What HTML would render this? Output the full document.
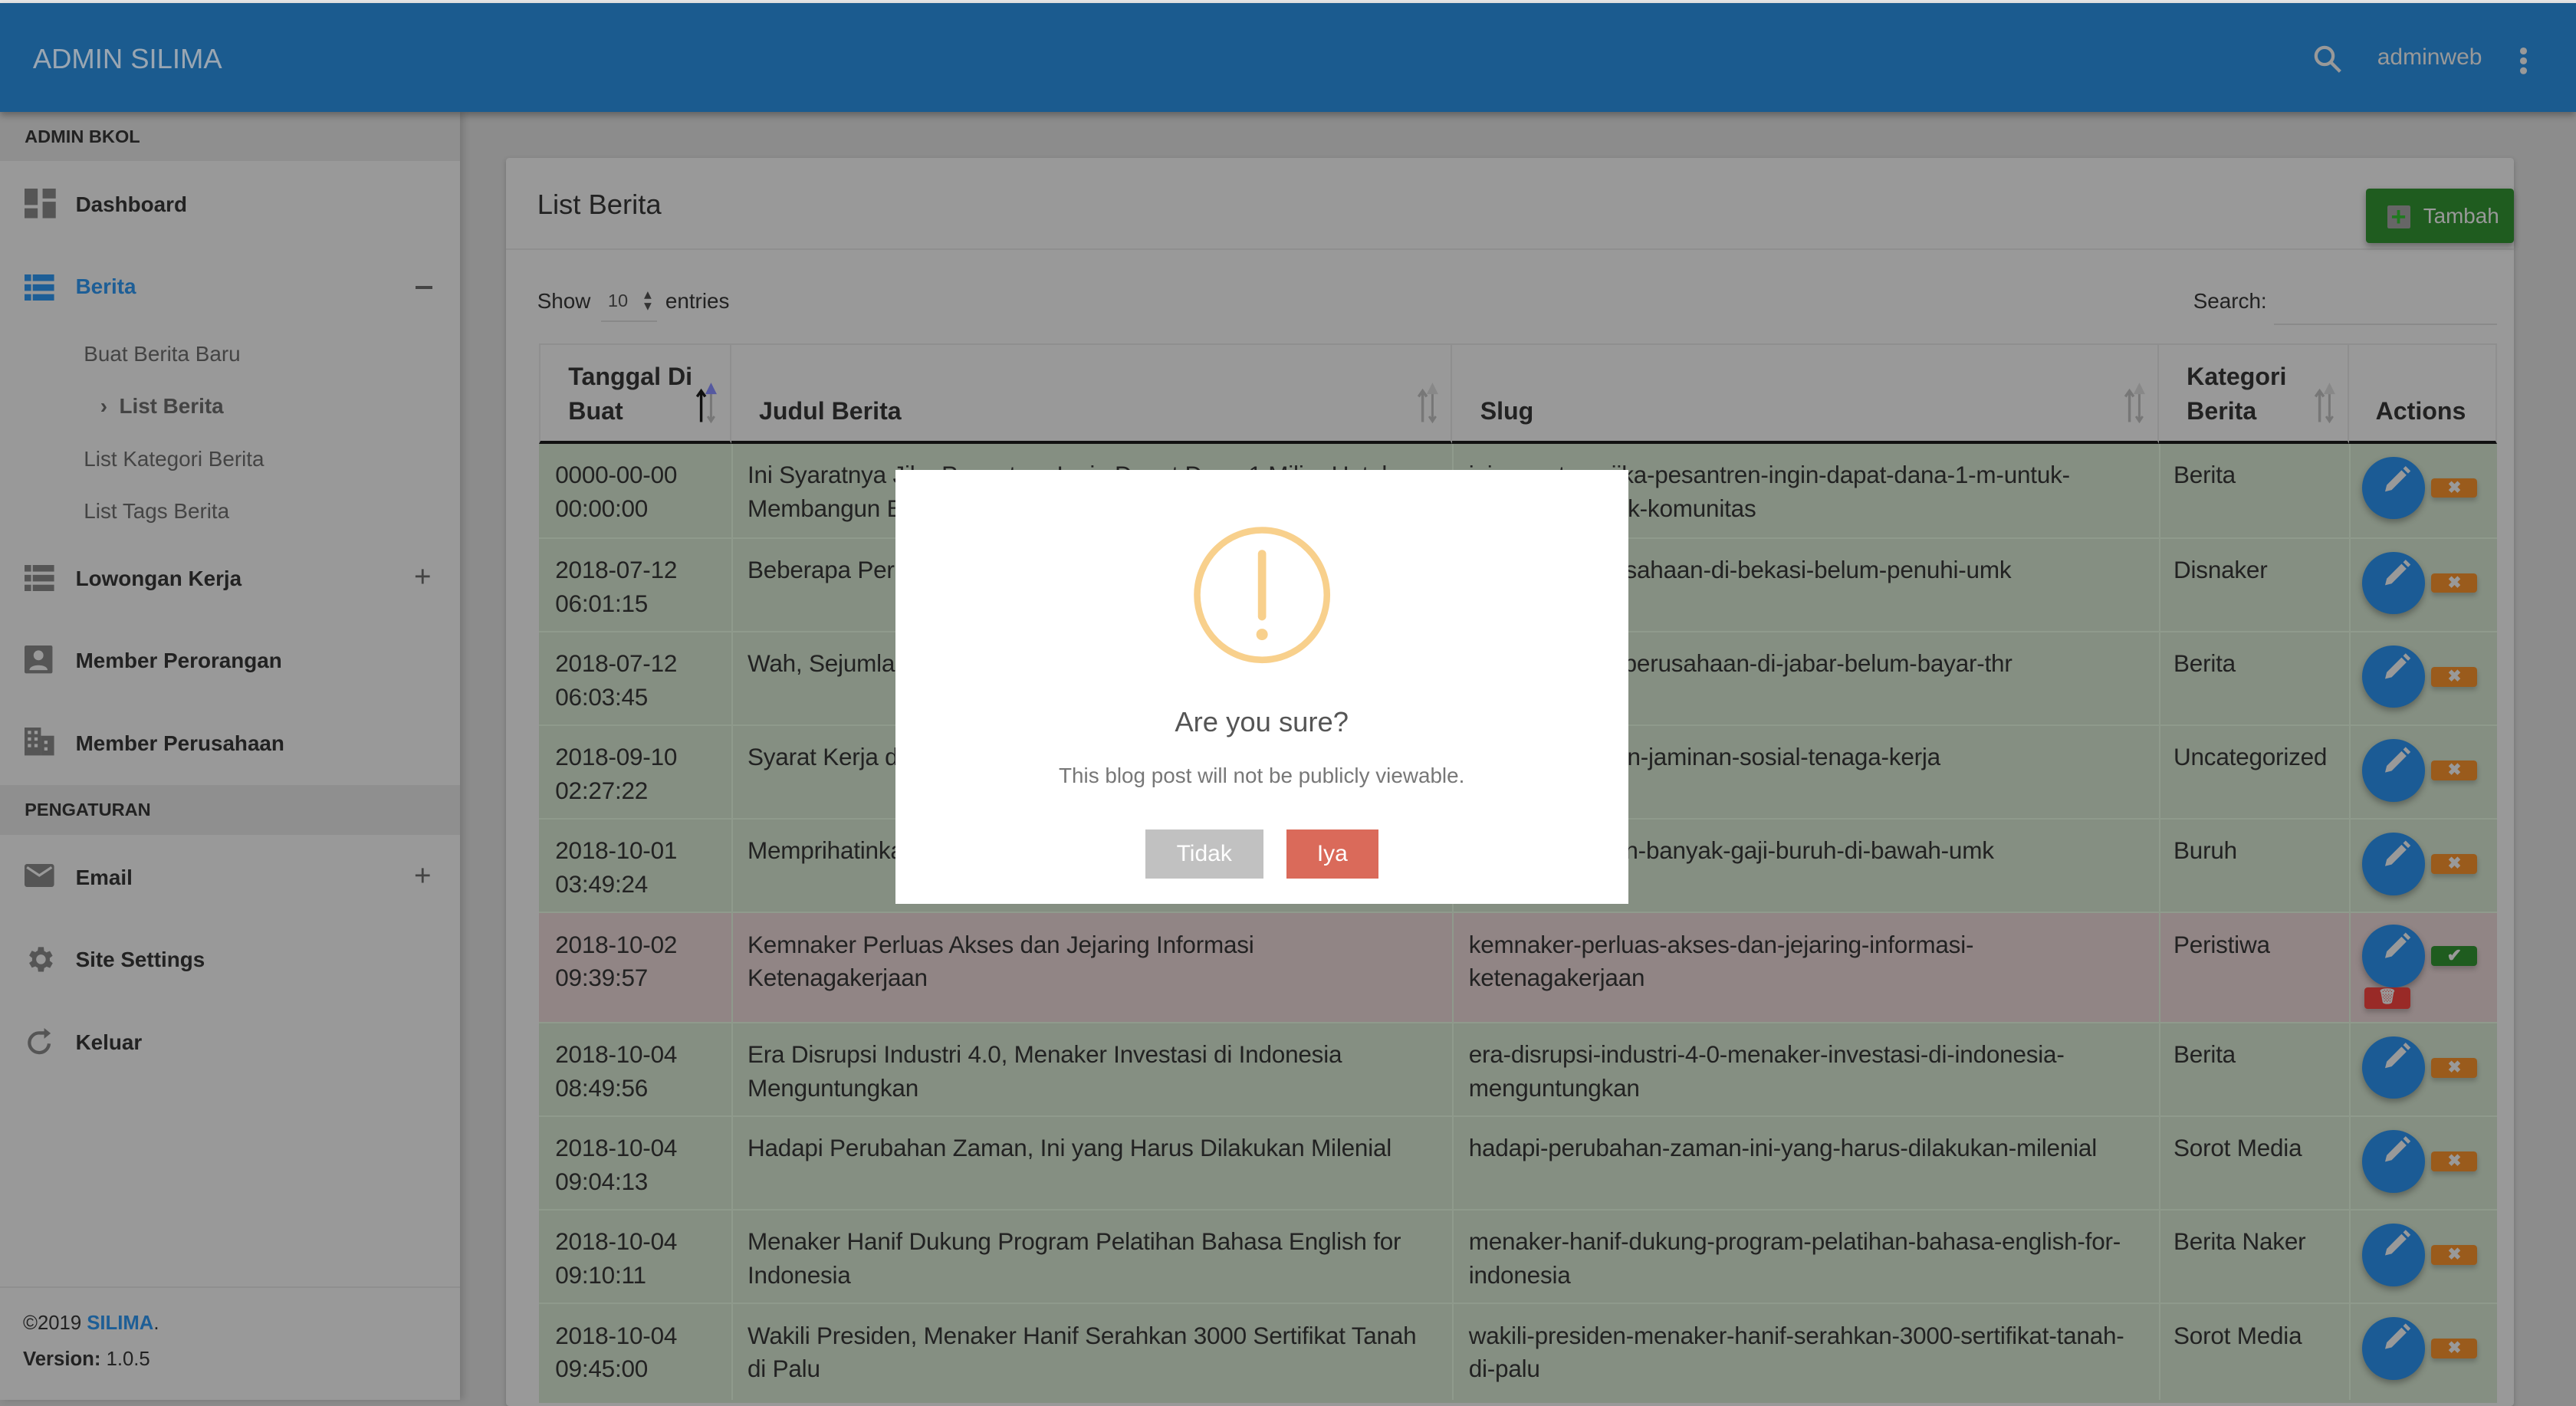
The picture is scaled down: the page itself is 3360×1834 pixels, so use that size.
<!DOCTYPE html>
<html><head><meta charset="utf-8">
<style>
html,body{margin:0;padding:0;}
body{width:1568px;height:851.2px;overflow:hidden;zoom:2.142857;font-family:"Liberation Sans",sans-serif;background:#8c8c8c;position:relative;color:#222;}
.a{position:absolute;}
#top{left:0;top:0;width:1568px;height:2px;background:#e6e6e6;}
#hdr{left:0;top:2px;width:1568px;height:66px;background:#1b5b8f;box-shadow:0 2px 4px rgba(0,0,0,.3);z-index:3;}
#side{left:0;top:68px;width:280px;height:784px;background:#999;box-shadow:2px 0 4px rgba(0,0,0,.15);z-index:2;}
.sec{left:0;width:280px;height:30px;background:#8f8f8f;font-size:11px;font-weight:bold;color:#222;line-height:30px;padding-left:15px;box-sizing:border-box;}
.it{left:46px;font-size:13px;font-weight:bold;color:#222;}
.sub{left:51px;font-size:13px;color:#444;}
.ic{left:15px;}
.pm{left:252px;font-size:18px;color:#444;}
#card{left:308px;top:96px;width:1222px;height:760px;background:#999;border-radius:2px;box-shadow:0 1px 3px rgba(0,0,0,.2);}
.th{top:210px;height:60px;border-bottom:2px solid #111;border-right:1px solid #8f8f8f;background:#999;font-size:15px;font-weight:bold;line-height:21px;box-sizing:border-box;}
.row{left:328px;width:1192px;}
.c{position:absolute;font-size:14.7px;line-height:20.5px;color:#222;top:9px;white-space:normal;letter-spacing:-0.1px;}
.ed{position:absolute;left:1110px;width:38px;height:38px;border-radius:50%;background:#1b5b95;box-shadow:0 2px 4px rgba(0,0,0,.3);}
.x{position:absolute;left:1152px;width:28px;height:12px;background:#9a5b1c;border-radius:2px;color:#999;font-size:10px;font-weight:bold;text-align:center;line-height:12px;box-shadow:0 2px 3px rgba(0,0,0,.2);}
</style></head><body>
<div class="a" id="top"></div>
<div class="a" id="hdr">
 <div class="a" style="left:20px;top:24px;font-size:17px;color:#9aa6b2;">ADMIN SILIMA</div>
 <svg class="a" style="left:1408px;top:25px" width="18" height="18" viewBox="0 0 18 18"><circle cx="7" cy="7" r="5.2" fill="none" stroke="#999" stroke-width="2"/><line x1="11" y1="11" x2="16.5" y2="16.5" stroke="#999" stroke-width="2"/></svg>
 <div class="a" style="left:1447px;top:25px;font-size:14px;color:#999;">adminweb</div>
 <div class="a" style="left:1534px;top:27px;width:4px;height:4px;border-radius:2px;background:#999;box-shadow:0 6px 0 #999,0 12px 0 #999;"></div>
</div>
<div class="a" id="side">
 <div class="a sec" style="top:0">ADMIN BKOL</div>
 <svg class="a ic" style="top:47px" width="19" height="18" viewBox="0 0 19 18" fill="#555"><rect x="0" y="0" width="8" height="10"/><rect x="11" y="0" width="8" height="6"/><rect x="0" y="12" width="8" height="6"/><rect x="11" y="8" width="8" height="10"/></svg>
 <div class="a it" style="top:49px">Dashboard</div>
 <svg class="a ic" style="top:99px" width="18" height="16" viewBox="0 0 18 16" fill="#1d5e96"><rect x="0" y="0" width="4" height="4"/><rect x="5" y="0" width="13" height="4"/><rect x="0" y="6" width="4" height="4"/><rect x="5" y="6" width="13" height="4"/><rect x="0" y="12" width="4" height="4"/><rect x="5" y="12" width="13" height="4"/></svg>
 <div class="a it" style="top:99px;color:#1d5e96">Berita</div>
 <div class="a" style="left:253px;top:106px;width:10px;height:2px;background:#444"></div>
 <div class="a sub" style="top:140px">Buat Berita Baru</div>
 <div class="a sub" style="top:172px;left:61px;font-weight:bold;">&#8250;&nbsp; List Berita</div>
 <div class="a sub" style="top:204px">List Kategori Berita</div>
 <div class="a sub" style="top:236px">List Tags Berita</div>
 <svg class="a ic" style="top:276px" width="18" height="16" viewBox="0 0 18 16" fill="#555"><rect x="0" y="0" width="4" height="4"/><rect x="5" y="0" width="13" height="4"/><rect x="0" y="6" width="4" height="4"/><rect x="5" y="6" width="13" height="4"/><rect x="0" y="12" width="4" height="4"/><rect x="5" y="12" width="13" height="4"/></svg>
 <div class="a it" style="top:277px">Lowongan Kerja</div>
 <div class="a pm" style="top:273px">+</div>
 <svg class="a ic" style="top:325px" width="17" height="17" viewBox="0 0 17 17"><rect width="17" height="17" rx="1" fill="#555"/><circle cx="8.5" cy="6" r="3" fill="#999"/><path d="M3 15c0-4 11-4 11 0z" fill="#999"/></svg>
 <div class="a it" style="top:327px">Member Perorangan</div>
 <svg class="a ic" style="top:375px" width="18" height="17" viewBox="0 0 18 17" fill="#555"><rect x="0" y="0" width="10" height="17"/><rect x="10" y="5" width="8" height="12"/><g fill="#999"><rect x="2" y="2" width="2" height="2"/><rect x="6" y="2" width="2" height="2"/><rect x="2" y="6" width="2" height="2"/><rect x="6" y="6" width="2" height="2"/><rect x="2" y="10" width="2" height="2"/><rect x="6" y="10" width="2" height="2"/><rect x="12" y="8" width="2" height="2"/><rect x="12" y="12" width="2" height="2"/></g></svg>
 <div class="a it" style="top:377px">Member Perusahaan</div>
 <div class="a sec" style="top:410px">PENGATURAN</div>
 <svg class="a ic" style="top:458px" width="18" height="14" viewBox="0 0 18 14"><rect width="18" height="14" rx="1.5" fill="#555"/><path d="M1.5 2l7.5 5 7.5-5" fill="none" stroke="#999" stroke-width="1.5"/></svg>
 <div class="a it" style="top:459px">Email</div>
 <div class="a pm" style="top:455px">+</div>
 <svg class="a ic" style="top:506px" width="20" height="20" viewBox="0 0 24 24" fill="#555"><path d="M19.4 13a7.5 7.5 0 000-2l2.1-1.6-2-3.5-2.5 1a7 7 0 00-1.7-1L15 3h-4l-.4 2.7a7 7 0 00-1.7 1l-2.5-1-2 3.5L6.6 11a7.5 7.5 0 000 2l-2.2 1.6 2 3.5 2.5-1a7 7 0 001.7 1L11 21h4l.4-2.7a7 7 0 001.7-1l2.5 1 2-3.5zM13 15.5a3.5 3.5 0 110-7 3.5 3.5 0 010 7z" transform="translate(-1 0)"/></svg>
 <div class="a it" style="top:509px">Site Settings</div>
 <svg class="a ic" style="top:558px;left:16px" width="17" height="17" viewBox="0 0 17 17"><path d="M14 9.5A6 6 0 118.5 3H12" fill="none" stroke="#555" stroke-width="2"/><path d="M11 0l4 3.2L11 6.5z" fill="#555"/></svg>
 <div class="a it" style="top:559px">Keluar</div>
 <div class="a" style="left:0;top:715px;width:280px;height:1px;background:#8f8f8f"></div>
 <div class="a" style="left:14px;top:731px;font-size:12px;color:#222">©2019 <b style="color:#1d5e96">SILIMA</b>.</div>
 <div class="a" style="left:14px;top:753px;font-size:12px;color:#222"><b>Version:</b> 1.0.5</div>
</div>

<div class="a" id="card"></div>
<div class="a" style="left:327px;top:115px;font-size:17px;color:#222">List Berita</div>
<div class="a" style="left:308px;top:151px;width:1222px;height:1px;background:#8f8f8f"></div>
<div class="a" style="left:1440px;top:115px;width:90px;height:33px;background:#1f5c1f;border-radius:2px;box-shadow:0 2px 4px rgba(0,0,0,.3)"></div>
<div class="a" style="left:1453px;top:125px;width:14px;height:14px;background:#666;border-radius:1px;color:#1f7a1f;font-size:16px;font-weight:bold;line-height:14px;text-align:center">+</div>
<div class="a" style="left:1475px;top:124px;font-size:13px;color:#999">Tambah</div>
<div class="a" style="left:327px;top:176px;font-size:13px;color:#222">Show</div>
<div class="a" style="left:370px;top:177px;font-size:11px;color:#333">10</div>
<div class="a" style="left:392px;top:176px;font-size:9px;color:#333;line-height:7px">▴<br>▾</div>
<div class="a" style="left:366px;top:195px;width:34px;height:1px;background:#888"></div>
<div class="a" style="left:405px;top:176px;font-size:13px;color:#222">entries</div>
<div class="a" style="left:1335px;top:176px;font-size:13px;color:#222">Search:</div>
<div class="a" style="left:1384px;top:197px;width:136px;height:1px;background:#8a8a8a"></div>

<div class="a" style="left:328px;top:209px;width:1192px;height:1px;background:#8f8f8f"></div>
<div class="a th" style="left:328px;width:117px;border-left:1px solid #8f8f8f;padding:9px 0 0 17px">Tanggal Di<br>Buat</div>
<div class="a th" style="left:445px;width:439px;padding:30px 0 0 17px">Judul Berita</div>
<div class="a th" style="left:884px;width:430px;padding:30px 0 0 17px">Slug</div>
<div class="a th" style="left:1314px;width:116px;padding:9px 0 0 17px">Kategori<br>Berita</div>
<div class="a th" style="left:1430px;width:90px;padding:30px 0 0 16px">Actions</div>
<svg class="a" style="left:423px;top:232px" width="14" height="26" viewBox="0 0 14 26"><path d="M4 25V7M1.5 9.5L4 6l2.5 3.5" fill="none" stroke="#111" stroke-width="1.6"/><path d="M10 7v17M8 21.5l2 3 2-3" fill="none" stroke="#777" stroke-width="1.4"/><path d="M6.5 8L10 1l3.5 7z" fill="#5559a0"/></svg>
<svg class="a" style="left:862px;top:232px" width="14" height="26" viewBox="0 0 14 26"><path d="M4 25V7M1.5 9.5L4 6l2.5 3.5" fill="none" stroke="#777" stroke-width="1.6"/><path d="M10 7v17M8 21.5l2 3 2-3" fill="none" stroke="#777" stroke-width="1.4"/><path d="M6.5 8L10 1l3.5 7z" fill="#888"/></svg>
<svg class="a" style="left:1292px;top:232px" width="14" height="26" viewBox="0 0 14 26"><path d="M4 25V7M1.5 9.5L4 6l2.5 3.5" fill="none" stroke="#777" stroke-width="1.6"/><path d="M10 7v17M8 21.5l2 3 2-3" fill="none" stroke="#777" stroke-width="1.4"/><path d="M6.5 8L10 1l3.5 7z" fill="#888"/></svg>
<svg class="a" style="left:1408px;top:232px" width="14" height="26" viewBox="0 0 14 26"><path d="M4 25V7M1.5 9.5L4 6l2.5 3.5" fill="none" stroke="#777" stroke-width="1.6"/><path d="M10 7v17M8 21.5l2 3 2-3" fill="none" stroke="#777" stroke-width="1.4"/><path d="M6.5 8L10 1l3.5 7z" fill="#888"/></svg>

<!-- rows -->
<div class="a row" style="top:270px;height:57px;background:#858f82">
 <div class="c" style="left:10px">0000-00-00<br>00:00:00</div>
 <div class="c" style="left:127px;width:420px">Ini Syaratnya Jika Pesantren Ingin Dapat Dana 1 Miliar Untuk<br>Membangun BLK Komunitas</div>
 <div class="c" style="left:566px">ini-syaratnya-jika-pesantren-ingin-dapat-dana-1-m-untuk-<br>membangun-blk-komunitas</div>
 <div class="c" style="left:995px">Berita</div>
 <div class="ed" style="top:8px"></div><div class="x" style="top:21px">✖</div>
</div>
<div class="a row" style="top:327px;height:57px;background:#858f82;border-top:1px solid #8f9a8c">
 <div class="c" style="left:10px">2018-07-12<br>06:01:15</div>
 <div class="c" style="left:127px">Beberapa Perusahaan di Bekasi Belum Penuhi UMK</div>
 <div class="c" style="left:566px">beberapa-perusahaan-di-bekasi-belum-penuhi-umk</div>
 <div class="c" style="left:995px">Disnaker</div>
 <div class="ed" style="top:8px"></div><div class="x" style="top:21px">✖</div>
</div>
<div class="a row" style="top:384px;height:57px;background:#858f82;border-top:1px solid #8f9a8c">
 <div class="c" style="left:10px">2018-07-12<br>06:03:45</div>
 <div class="c" style="left:127px">Wah, Sejumlah Perusahaan di Jabar Belum Bayar THR</div>
 <div class="c" style="left:566px">wah-sejumlah-perusahaan-di-jabar-belum-bayar-thr</div>
 <div class="c" style="left:995px">Berita</div>
 <div class="ed" style="top:8px"></div><div class="x" style="top:21px">✖</div>
</div>
<div class="a row" style="top:441px;height:57px;background:#858f82;border-top:1px solid #8f9a8c">
 <div class="c" style="left:10px">2018-09-10<br>02:27:22</div>
 <div class="c" style="left:127px">Syarat Kerja dan Jaminan Sosial Tenaga Kerja</div>
 <div class="c" style="left:566px">syarat-kerja-dan-jaminan-sosial-tenaga-kerja</div>
 <div class="c" style="left:995px">Uncategorized</div>
 <div class="ed" style="top:8px"></div><div class="x" style="top:21px">✖</div>
</div>
<div class="a row" style="top:498px;height:57px;background:#858f82;border-top:1px solid #8f9a8c">
 <div class="c" style="left:10px">2018-10-01<br>03:49:24</div>
 <div class="c" style="left:127px">Memprihatinkan, Banyak Gaji Buruh di Bawah UMK</div>
 <div class="c" style="left:566px">memprihatinkan-banyak-gaji-buruh-di-bawah-umk</div>
 <div class="c" style="left:995px">Buruh</div>
 <div class="ed" style="top:8px"></div><div class="x" style="top:21px">✖</div>
</div>
<div class="a row" style="top:555px;height:67px;background:#918585;border-top:1px solid #8f9a8c">
 <div class="c" style="left:10px">2018-10-02<br>09:39:57</div>
 <div class="c" style="left:127px">Kemnaker Perluas Akses dan Jejaring Informasi<br>Ketenagakerjaan</div>
 <div class="c" style="left:566px">kemnaker-perluas-akses-dan-jejaring-informasi-<br>ketenagakerjaan</div>
 <div class="c" style="left:995px">Peristiwa</div>
 <div class="ed" style="top:7px"></div><div class="x" style="top:20px;background:#1f5c1f;font-size:11px">✔</div>
 <div class="x" style="left:1111px;top:45px;width:28px;height:13px;background:#992a27;font-size:9px">🗑</div>
</div>
<div class="a row" style="top:622px;height:57px;background:#858f82;border-top:1px solid #8f9a8c">
 <div class="c" style="left:10px">2018-10-04<br>08:49:56</div>
 <div class="c" style="left:127px">Era Disrupsi Industri 4.0, Menaker Investasi di Indonesia<br>Menguntungkan</div>
 <div class="c" style="left:566px">era-disrupsi-industri-4-0-menaker-investasi-di-indonesia-<br>menguntungkan</div>
 <div class="c" style="left:995px">Berita</div>
 <div class="ed" style="top:8px"></div><div class="x" style="top:21px">✖</div>
</div>
<div class="a row" style="top:679px;height:57px;background:#858f82;border-top:1px solid #8f9a8c">
 <div class="c" style="left:10px">2018-10-04<br>09:04:13</div>
 <div class="c" style="left:127px">Hadapi Perubahan Zaman, Ini yang Harus Dilakukan Milenial</div>
 <div class="c" style="left:566px">hadapi-perubahan-zaman-ini-yang-harus-dilakukan-milenial</div>
 <div class="c" style="left:995px">Sorot Media</div>
 <div class="ed" style="top:8px"></div><div class="x" style="top:21px">✖</div>
</div>
<div class="a row" style="top:736px;height:57px;background:#858f82;border-top:1px solid #8f9a8c">
 <div class="c" style="left:10px">2018-10-04<br>09:10:11</div>
 <div class="c" style="left:127px">Menaker Hanif Dukung Program Pelatihan Bahasa English for<br>Indonesia</div>
 <div class="c" style="left:566px">menaker-hanif-dukung-program-pelatihan-bahasa-english-for-<br>indonesia</div>
 <div class="c" style="left:995px">Berita Naker</div>
 <div class="ed" style="top:8px"></div><div class="x" style="top:21px">✖</div>
</div>
<div class="a row" style="top:793px;height:60px;background:#858f82;border-top:1px solid #8f9a8c">
 <div class="c" style="left:10px">2018-10-04<br>09:45:00</div>
 <div class="c" style="left:127px">Wakili Presiden, Menaker Hanif Serahkan 3000 Sertifikat Tanah<br>di Palu</div>
 <div class="c" style="left:566px">wakili-presiden-menaker-hanif-serahkan-3000-sertifikat-tanah-<br>di-palu</div>
 <div class="c" style="left:995px">Sorot Media</div>
 <div class="ed" style="top:8px"></div><div class="x" style="top:21px">✖</div>
</div>
<div class="a" style="left:445px;top:270px;width:1px;height:582px;background:#8f9a8c"></div>
<div class="a" style="left:884px;top:270px;width:1px;height:582px;background:#8f9a8c"></div>
<div class="a" style="left:1314px;top:270px;width:1px;height:582px;background:#8f9a8c"></div>
<div class="a" style="left:1430px;top:270px;width:1px;height:582px;background:#8f9a8c"></div>
<svg class="a" style="left:1438px;top:270px" width="40" height="582" viewBox="0 0 40 582">
 <g fill="#999">
  <path id="p" d="M14 29l1-4 9-9 3 3-9 9zM25 15l1.5-1.5 3 3L28 18z"/>
  <use href="#p" y="57"/><use href="#p" y="114"/><use href="#p" y="171"/><use href="#p" y="228"/><use href="#p" y="284"/><use href="#p" y="351"/><use href="#p" y="408"/><use href="#p" y="465"/><use href="#p" y="522"/>
 </g>
</svg>

<!-- modal -->
<div class="a" style="left:545px;top:286px;width:446px;height:264px;background:#fff;"></div>
<svg class="a" style="left:725px;top:319px" width="86" height="86" viewBox="0 0 86 86"><circle cx="43" cy="43" r="39.5" fill="none" stroke="#f8d08c" stroke-width="4"/><line x1="43" y1="18" x2="43" y2="56" stroke="#f8d08c" stroke-width="5" stroke-linecap="round"/><circle cx="43" cy="67" r="3.5" fill="#f8d08c"/></svg>
<div class="a" style="left:545px;top:430px;width:446px;text-align:center;font-size:17px;color:#555">Are you sure?</div>
<div class="a" style="left:545px;top:465px;width:446px;text-align:center;font-size:13px;color:#777">This blog post will not be publicly viewable.</div>
<div class="a" style="left:697px;top:505px;width:72px;height:30px;background:#c1c1c1;color:#fff;font-size:14px;text-align:center;line-height:30px">Tidak</div>
<div class="a" style="left:783px;top:505px;width:56px;height:30px;background:#da6a5a;color:#fff;font-size:14px;text-align:center;line-height:30px">Iya</div>
</body></html>
